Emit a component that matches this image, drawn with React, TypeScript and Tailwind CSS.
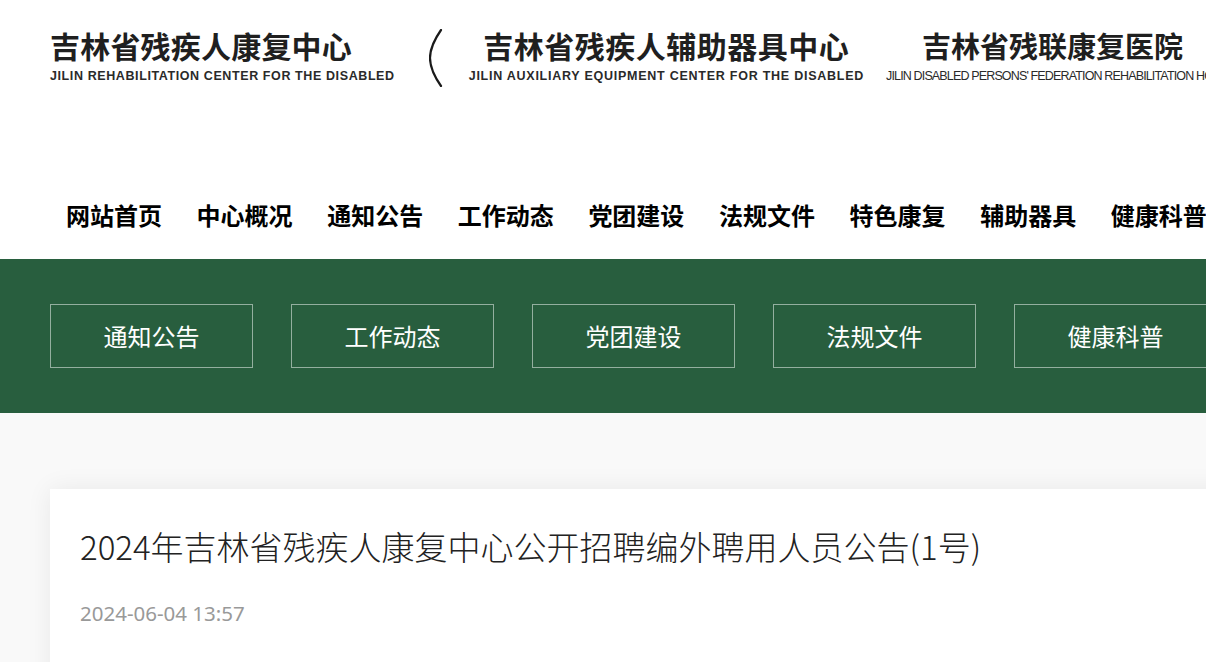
import React from "react";

const cjk = { fontFamily: '"Noto Sans CJK SC", "Noto Sans", sans-serif' };
const latin = { fontFamily: '"Liberation Sans", Arial, sans-serif' };

const mainNav = [
  "网站首页",
  "中心概况",
  "通知公告",
  "工作动态",
  "党团建设",
  "法规文件",
  "特色康复",
  "辅助器具",
  "健康科普",
  "联系我们",
];

const subNav = ["通知公告", "工作动态", "党团建设", "法规文件", "健康科普"];

function Logo({
  cn,
  en,
  align = "start",
  cnClass = "",
  enClass = "",
}: {
  cn: string;
  en: string;
  align?: "start" | "center";
  cnClass?: string;
  enClass?: string;
}) {
  return (
    <div
      className={
        "flex flex-col " + (align === "center" ? "items-center" : "items-start")
      }
    >
      <div
        className={"text-[30px] leading-[36px] font-semibold text-[#1f1f1f] whitespace-nowrap " + cnClass}
        style={cjk}
      >
        {cn}
      </div>
      <div
        className={"mt-[6px] text-[12.5px] leading-[14px] text-[#2a2a2a] whitespace-nowrap " + enClass}
        style={latin}
      >
        {en}
      </div>
    </div>
  );
}

function Paren() {
  return (
    <svg width="14" height="58" viewBox="0 0 14 58" className="shrink-0">
      <path
        d="M12 1 C 3 14, 1 24, 1 29 C 1 34, 3 44, 12 57"
        fill="none"
        stroke="#1a1a1a"
        strokeWidth="2.2"
        strokeLinecap="round"
      />
    </svg>
  );
}

export default function App() {
  return (
    <div className="w-full h-[662px] overflow-hidden bg-[#f9f9f9]">
      <div className="w-[1440px]">
        {/* header */}
        <header className="bg-white h-[259px]">
          <div className="flex items-start pl-[50px] pt-[27px]">
            <Logo
              cn="吉林省残疾人康复中心"
              en="JILIN REHABILITATION CENTER FOR THE DISABLED"
              cnClass="tracking-[0.2px]"
              enClass="font-bold tracking-[0.6px]"
            />
            <div className="ml-[34px] mt-[2px]">
              <Paren />
            </div>
            <div className="ml-[26px]">
              <Logo
                cn="吉林省残疾人辅助器具中心"
                en="JILIN AUXILIARY EQUIPMENT CENTER FOR THE DISABLED"
                align="center"
                cnClass="tracking-[0.5px]"
                enClass="font-bold tracking-[0.75px]"
              />
            </div>
            <div className="ml-[22px] w-[380px] flex flex-col items-start">
              <div
                className="ml-[36px] text-[29px] leading-[36px] font-semibold text-[#1f1f1f] whitespace-nowrap"
                style={cjk}
              >
                吉林省残联康复医院
              </div>
              <div
                className="mt-[6px] text-[12.5px] leading-[14px] text-[#2a2a2a] whitespace-nowrap tracking-[-0.85px]"
                style={latin}
              >
                JILIN DISABLED PERSONS' FEDERATION REHABILITATION HOSPITAL
              </div>
            </div>
          </div>

          <nav className="flex gap-[34.6px] pl-[66px] mt-[112px]">
            {mainNav.map((item) => (
              <a
                key={item}
                className="text-[24px] leading-[32px] font-bold text-black whitespace-nowrap"
                style={cjk}
              >
                {item}
              </a>
            ))}
          </nav>
        </header>

        {/* green sub navigation */}
        <section className="bg-[#285e3e] h-[154px] flex items-center gap-[38px] pl-[50px]">
          {subNav.map((item) => (
            <a
              key={item}
              className="w-[203px] h-[64px] border border-white/50 flex items-center justify-center text-[24px] text-white"
              style={cjk}
            >
              {item}
            </a>
          ))}
        </section>

        {/* article */}
        <main className="pt-[76px] pl-[50px]">
          <article className="bg-white shadow-[0_0_24px_rgba(0,0,0,0.07)] h-[300px] pl-[30px] pt-[33px]">
            <h1
              className="text-[33px] leading-[48px] font-light text-[#222]"
              style={cjk}
            >
              2024年吉林省残疾人康复中心公开招聘编外聘用人员公告(1号)
            </h1>
            <div
              className="mt-[29px] text-[20.5px] leading-[28px] text-[#999]"
              style={{ fontFamily: '"Noto Sans", sans-serif' }}
            >
              2024-06-04 13:57
            </div>
          </article>
        </main>
      </div>
    </div>
  );
}
